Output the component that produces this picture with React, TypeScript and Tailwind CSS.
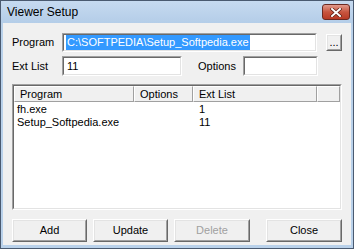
const font = { fontFamily: '"Liberation Sans", Arial, sans-serif' };

function Sunken({ className = '', children }: { className?: string; children?: React.ReactNode }) {
  return (
    <div className={`border border-t-[#a0a0a0] border-l-[#a0a0a0] border-b-white border-r-white ${className}`}>
      <div className="h-full w-full border border-t-[#696969] border-l-[#696969] border-b-[#e3e3e3] border-r-[#e3e3e3] bg-white overflow-hidden">
        {children}
      </div>
    </div>
  );
}

function Btn({ label, disabled, className = '' }: { label: string; disabled?: boolean; className?: string }) {
  return (
    <div className={`border border-t-white border-l-white border-b-[#696969] border-r-[#696969] ${className}`}>
      <div className={`flex h-full w-full items-center justify-center border border-t-[#e3e3e3] border-l-[#e3e3e3] border-b-[#a0a0a0] border-r-[#a0a0a0] bg-[#f0f0f0] text-[11px] ${disabled ? 'text-[#a0a0a0]' : 'text-black'}`}>
        {label}
      </div>
    </div>
  );
}

function HeaderCell({ label, className = '' }: { label: string; className?: string }) {
  return (
    <div className={`h-full border border-t-white border-l-white border-b-[#a0a0a0] border-r-[#a0a0a0] pl-[5px] text-[11px] leading-[14px] ${className}`}>
      {label}
    </div>
  );
}

export default function App() {
  return (
    <div style={font} className="flex h-[249px] w-[354px] flex-col border border-[#4a5a70] bg-[#b9d1ea] text-black">
      {/* Title bar */}
      <div className="flex h-[22px] items-center justify-between bg-gradient-to-b from-[#c6daf0] to-[#b4cde8] pl-[6px] pr-[3px]">
        <span className="text-[12px] text-black">Viewer Setup</span>
        <div className="flex h-[16px] w-[28px] items-center justify-center rounded-[3px] border border-[#6b2a22] bg-gradient-to-b from-[#e0998c] via-[#c8553f] to-[#b83a25]">
          <svg width="12" height="9" viewBox="0 0 12 9">
            <path d="M2 1 L10 8 M10 1 L2 8" stroke="#5a1a10" strokeWidth="3.4" strokeLinecap="square" />
            <path d="M2 1 L10 8 M10 1 L2 8" stroke="white" strokeWidth="2" strokeLinecap="square" />
          </svg>
        </div>
      </div>

      {/* Client */}
      <div className="mx-[2px] mb-[3px] flex flex-1 flex-col bg-[#f0f0f0] px-[9px] pt-[10px]">
        <div className="flex h-[19px] items-center">
          <span className="w-[50px] text-[11px]">Program</span>
          <Sunken className="h-[19px] w-[255px]">
            <div className="flex h-full items-center pl-[2px]">
              <span className="bg-[#3399ff] px-[1px] text-[11px] leading-[15px] text-white">C:\SOFTPEDIA\Setup_Softpedia.exe</span>
            </div>
          </Sunken>
          <Btn label="..." className="ml-[9px] h-[17px] w-[16px]" />
        </div>

        <div className="mt-[4px] flex h-[20px] items-center">
          <span className="w-[50px] text-[11px]">Ext List</span>
          <Sunken className="h-[20px] w-[120px]">
            <div className="flex h-full items-center pl-[3px] text-[11px]">11</div>
          </Sunken>
          <span className="ml-[16px] w-[45px] text-[11px]">Options</span>
          <Sunken className="h-[20px] w-[75px]" />
        </div>

        <Sunken className="mt-[8px] h-[126px] w-[330px]">
          <div className="flex h-[16px] bg-[#f0f0f0]">
            <HeaderCell label="Program" className="w-[120px]" />
            <HeaderCell label="Options" className="w-[59px]" />
            <HeaderCell label="Ext List" className="w-[124px]" />
            <HeaderCell label="" className="flex-1" />
          </div>
          <div className="pt-[1px] text-[11px] leading-[13px]">
            <div className="flex">
              <span className="w-[180px] pl-[3px]">fh.exe</span>
              <span className="pl-[5px]">1</span>
            </div>
            <div className="flex">
              <span className="w-[180px] pl-[3px]">Setup_Softpedia.exe</span>
              <span className="pl-[5px]">11</span>
            </div>
          </div>
        </Sunken>

        <div className="mt-[9px] flex h-[23px]">
          <Btn label="Add" className="h-[23px] w-[75px]" />
          <Btn label="Update" className="ml-[6px] h-[23px] w-[75px]" />
          <Btn label="Delete" disabled className="ml-[6px] h-[23px] w-[76px]" />
          <Btn label="Close" className="ml-[16px] h-[23px] w-[76px]" />
        </div>
      </div>
    </div>
  );
}
